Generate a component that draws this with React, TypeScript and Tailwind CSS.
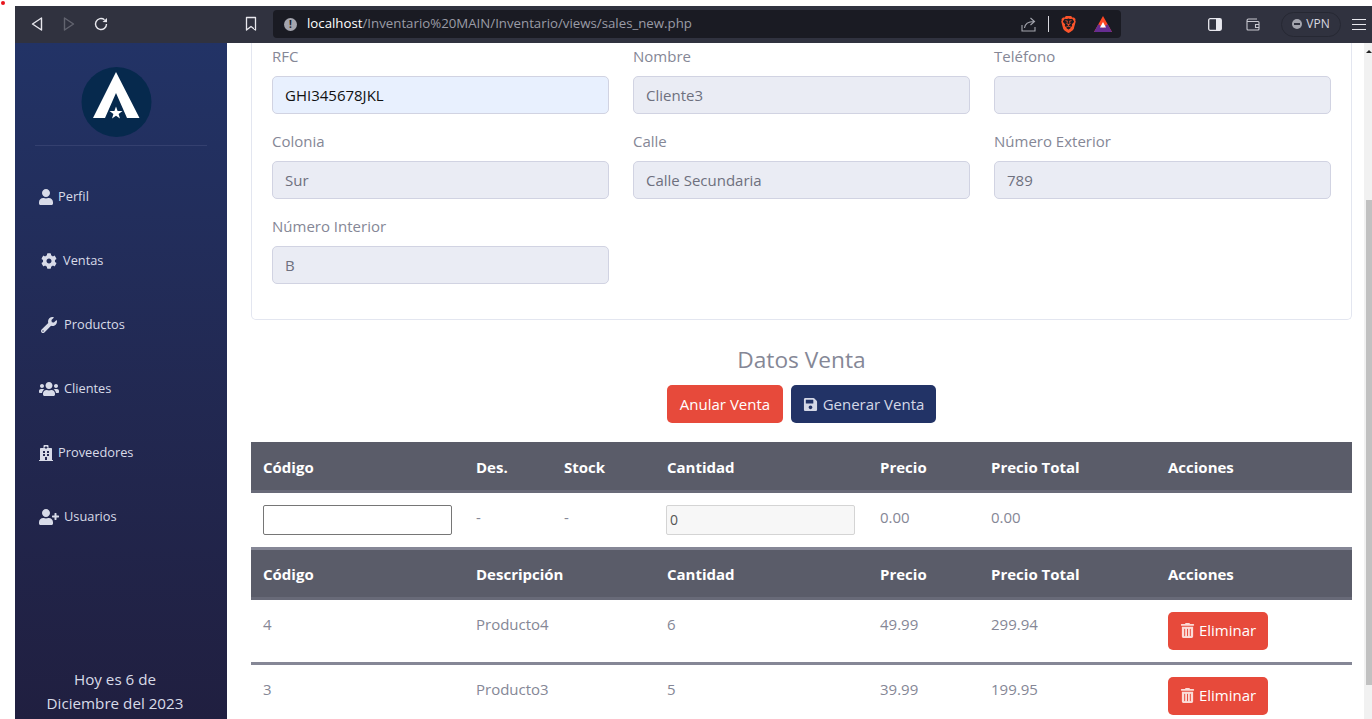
import { FaUser, FaCog, FaWrench, FaUsers, FaHospital, FaUserPlus, FaSave, FaTrashAlt } from 'react-icons/fa';
import { SiBrave } from 'react-icons/si';

const font = { fontFamily: '"Open Sans", "Noto Sans", sans-serif' };

const navItems = [
  { label: 'Perfil', Icon: FaUser, gap: 'gap-[4px] -ml-px', size: 16 },
  { label: 'Ventas', Icon: FaCog, gap: 'gap-[6px] ml-[2px]', size: 16 },
  { label: 'Productos', Icon: FaWrench, gap: 'gap-[7px] ml-[2px]', size: 16 },
  { label: 'Clientes', Icon: FaUsers, gap: 'gap-[5px]', size: 20 },
  { label: 'Proveedores', Icon: FaHospital, gap: 'gap-[4px] -ml-px', size: 16 },
  { label: 'Usuarios', Icon: FaUserPlus, gap: 'gap-[5px]', size: 20 },
];

const fields = [
  { label: 'RFC', value: 'GHI345678JKL', active: true },
  { label: 'Nombre', value: 'Cliente3' },
  { label: 'Teléfono', value: '' },
  { label: 'Colonia', value: 'Sur' },
  { label: 'Calle', value: 'Calle Secundaria' },
  { label: 'Número Exterior', value: '789' },
  { label: 'Número Interior', value: 'B' },
];

const rows = [
  { code: '4', name: 'Producto4', qty: '6', price: '49.99', total: '299.94' },
  { code: '3', name: 'Producto3', qty: '5', price: '39.99', total: '199.95' },
];

function Toolbar() {
  return (
    <div className="flex h-[37px] shrink-0 items-center bg-[#30323f] pb-px text-[#e8e8ee]">
      <div className="flex w-[258px] items-center">
        <svg className="ml-[15px]" width="14" height="16" viewBox="0 0 14 16" fill="none" stroke="#e8e8ee" strokeWidth="1.4" strokeLinejoin="round">
          <path d="M11.5 2 L2.5 8 L11.5 14 Z" />
        </svg>
        <svg className="ml-[18px]" width="14" height="16" viewBox="0 0 14 16" fill="none" stroke="#62646f" strokeWidth="1.4" strokeLinejoin="round">
          <path d="M2.5 2 L11.5 8 L2.5 14 Z" />
        </svg>
        <svg className="ml-[17px]" width="16" height="16" viewBox="0 0 16 16" fill="none" stroke="#e8e8ee" strokeWidth="1.4">
          <path d="M13.5 8 A5.5 5.5 0 1 1 11.5 3.8" />
          <path d="M9.5 6 L14 6.2 L14 2 Z" fill="#e8e8ee" stroke="none" />
        </svg>
        <svg className="ml-[136px]" width="12" height="16" viewBox="0 0 12 16" fill="none" stroke="#e8e8ee" strokeWidth="1.3" strokeLinejoin="round">
          <path d="M1.5 1.5 H10.5 V14 L6 10.5 L1.5 14 Z" />
        </svg>
      </div>
      <div className="flex h-[28px] w-[848px] items-center rounded-[4px] bg-[#1a1b23]">
        <span className="ml-[11px] flex h-[13px] w-[13px] items-center justify-center rounded-full bg-[#a4a5ae] text-[10px] font-bold leading-none text-[#1a1b23]">!</span>
        <span className="ml-[10px] text-[13.25px] text-[#9a9ba6]">
          <span className="text-white">localhost</span>/Inventario%20MAIN/Inventario/views/sales_new.php
        </span>
        <div className="ml-auto flex items-center">
          <svg width="15" height="15" viewBox="0 0 15 15" fill="none" stroke="#a4a5ae" strokeWidth="1.1">
            <path d="M1 8 V14 H14 V10" />
            <path d="M3.5 11 C4 6.5 7 4.5 13 4.5 M9.5 1 L13.5 4.5 L9.5 8" />
          </svg>
          <span className="ml-[12px] h-[16px] w-px bg-[#d8d8de]" />
          <SiBrave className="ml-[11px] text-[#fb542b]" size={17} />
          <svg className="ml-[17px] mr-[9px]" width="18" height="16" viewBox="0 0 18 16">
            <path d="M9 0 L18 16 H0 Z" fill="#ff4724" />
            <path d="M0 16 L4.5 8 L9 12 L13.5 8 L18 16 Z" fill="#662d91" />
            <path d="M9 6 L12 11.5 H6 Z" fill="#fff" />
          </svg>
        </div>
      </div>
      <div className="flex flex-1 items-center">
        <svg className="ml-[87px]" width="14" height="13" viewBox="0 0 14 13">
          <rect x="0.7" y="0.7" width="12.6" height="11.6" rx="1.5" fill="none" stroke="#e8e8ee" strokeWidth="1.3" />
          <rect x="8" y="1" width="5" height="11" fill="#e8e8ee" />
        </svg>
        <svg className="ml-[24px]" width="14" height="13" viewBox="0 0 14 13" fill="none" stroke="#c8c8d0" strokeWidth="1.1">
          <path d="M1 3 V11 Q1 12 2 12 H12 Q13 12 13 11 V4.5 Q13 3.5 12 3.5 H2 Q1 3.5 1 2.5 Q1 1 2.5 1 H11" />
          <path d="M13 6.5 H9.5 V9.5 H13" />
        </svg>
        <div className="ml-[21px] flex h-[25px] w-[60px] items-center justify-center gap-[4px] rounded-full border border-[#262833]">
          <span className="relative h-[10px] w-[10px] rounded-full bg-[#a4a5ae]">
            <span className="absolute left-[2px] top-[4px] h-[2px] w-[6px] bg-[#30323f]" />
          </span>
          <span className="text-[12px] text-[#d8d8e0]">VPN</span>
        </div>
        <div className="ml-[11px] flex w-[14px] flex-col gap-[4px]">
          <span className="h-px bg-[#e8e8ee]" />
          <span className="h-px bg-[#e8e8ee]" />
          <span className="h-px bg-[#e8e8ee]" />
        </div>
      </div>
    </div>
  );
}

function Sidebar() {
  return (
    <aside className="flex w-[212px] shrink-0 flex-col bg-gradient-to-b from-[#223366] to-[#201f40] text-[#d8dbe8]">
      <div className="flex justify-center pr-[9px] pt-[24px]">
        <svg width="72" height="70" viewBox="0 0 72 70">
          <ellipse cx="35.5" cy="35" rx="35" ry="35" fill="#06294d" />
          <path d="M35 5 L58.5 51 H46 L35 26 L24 51 H12 Z" fill="#fff" />
          <path d="M35 39.5 L36.6 44 L41.5 44 L37.6 47 L39 51.5 L35 48.8 L31 51.5 L32.4 47 L28.5 44 L33.4 44 Z" fill="#fff" />
        </svg>
      </div>
      <div className="mx-[20px] mt-[8px] h-px bg-[#34406f]" />
      <nav className="mt-[19px] flex flex-col">
        {navItems.map(({ label, Icon, gap, size }) => (
          <div key={label} className="flex h-[64px] items-center pl-[24px]">
            <a className={`flex items-center text-[12.8px] ${gap}`}>
              <Icon size={size} />
              <span>{label}</span>
            </a>
          </div>
        ))}
      </nav>
      <div className="mt-auto pb-[4px] pr-[12px] text-center text-[15.2px] leading-[24px]">
        Hoy es 6 de
        <br />
        Diciembre del 2023
      </div>
    </aside>
  );
}

function ClientCard() {
  return (
    <section className="rounded-b-[5px] border border-t-0 border-[#e3e6f0] px-[20px] pb-[35px] pt-[1px]">
      <div className="grid grid-cols-3 gap-x-[24px] gap-y-[15px]">
        {fields.map((f) => (
          <div key={f.label}>
            <label className="mb-[8px] block text-[15px] leading-[24px] text-[#858796]">{f.label}</label>
            <input
              readOnly
              value={f.value}
              className={`block h-[38px] w-full rounded-[5px] border border-[#d1d3e2] px-[12px] text-[15px] ${
                f.active ? 'bg-[#e8f0fe] text-[#111]' : 'bg-[#eaecf4] text-[#6e707e]'
              }`}
            />
          </div>
        ))}
      </div>
    </section>
  );
}

function DeleteButton() {
  return (
    <button className="flex h-[38px] w-[100px] items-center justify-center gap-[4px] rounded-[5px] bg-[#e74a3b] text-[15px] text-white">
      <FaTrashAlt size={15} className="text-[#fbdcd8]" />
      Eliminar
    </button>
  );
}

function SalesTable() {
  const head = 'px-[12px] pt-[2px] text-left align-middle text-[15px] font-bold text-white';
  const cell = 'px-[12px] text-[15px] text-[#858796]';
  return (
    <table className="w-full table-fixed border-collapse">
      <colgroup>
        <col className="w-[213px]" />
        <col className="w-[88px]" />
        <col className="w-[103px]" />
        <col className="w-[213px]" />
        <col className="w-[111px]" />
        <col className="w-[177px]" />
        <col className="w-[196px]" />
      </colgroup>
      <thead>
        <tr className="h-[49px] border-b-[3px] border-[#686a78] bg-[#5a5c69]">
          <th className={head}>Código</th>
          <th className={head}>Des.</th>
          <th className={head}>Stock</th>
          <th className={head}>Cantidad</th>
          <th className={head}>Precio</th>
          <th className={head}>Precio Total</th>
          <th className={head}>Acciones</th>
        </tr>
      </thead>
      <tbody>
        <tr className="h-[57px]">
          <td className="px-[12px]">
            <input className="block h-[30px] w-full rounded-[2px] border border-[#767676] bg-white" />
          </td>
          <td className={`${cell} pb-[4px]`}>-</td>
          <td className={`${cell} pb-[4px]`}>-</td>
          <td className="px-[12px]">
            <input
              readOnly
              value="0"
              className="-ml-px block h-[30px] w-full rounded-[2px] border border-[#d4d4d4] bg-[#f7f7f7] px-[3px] text-[14px] text-[#555]"
            />
          </td>
          <td className={`${cell} pb-[4px]`}>0.00</td>
          <td className={`${cell} pb-[4px]`}>0.00</td>
          <td />
        </tr>
        <tr className="h-[50px] border-y-[3px] border-t-[#858796] border-b-[#686a78] bg-[#5a5c69]">
          <th className={head}>Código</th>
          <th className={head} colSpan={2}>Descripción</th>
          <th className={head}>Cantidad</th>
          <th className={head}>Precio</th>
          <th className={head}>Precio Total</th>
          <th className={head}>Acciones</th>
        </tr>
        {rows.map((r) => (
          <tr key={r.code} className="h-[65px] border-b-[3px] border-[#858796]">
            <td className={`${cell} pb-[13px]`}>{r.code}</td>
            <td className={`${cell} pb-[13px]`} colSpan={2}>{r.name}</td>
            <td className={`${cell} pb-[13px]`}>{r.qty}</td>
            <td className={`${cell} pb-[13px]`}>{r.price}</td>
            <td className={`${cell} pb-[13px]`}>{r.total}</td>
            <td className="px-[12px]">
              <DeleteButton />
            </td>
          </tr>
        ))}
      </tbody>
    </table>
  );
}

export default function App() {
  return (
    <div className="relative flex h-[719px] flex-col overflow-hidden bg-white pl-[15px] pt-[6px]" style={font}>
      <span className="absolute left-[1px] top-[1px] h-[4px] w-[4px] rounded-full bg-[#e8141c]" />
      <Toolbar />
      <div className="flex min-h-0 flex-1">
        <Sidebar />
        <main className="min-w-0 flex-1 overflow-hidden pl-[24px] pr-[12px]">
          <ClientCard />
          <h2 className="mt-[26px] text-center text-[22.7px] leading-[28px] text-[#858796]">Datos Venta</h2>
          <div className="mt-[11px] flex justify-center gap-[8px]">
            <button className="h-[38px] w-[116px] rounded-[5px] bg-[#e74a3b] text-[15px] text-white">Anular Venta</button>
            <button className="flex h-[38px] w-[145px] items-center justify-center gap-[5px] rounded-[5px] bg-[#223366] text-[15px] text-[#d4d8e6]">
              <FaSave size={15} />
              Generar Venta
            </button>
          </div>
          <div className="mt-[19px]">
            <SalesTable />
          </div>
        </main>
        <div className="relative w-[8px] shrink-0 bg-[#f1f1f1]">
          <span className="absolute right-0 top-[7px] h-0 w-0 border-x-[3px] border-b-[3px] border-x-transparent border-b-[#222]" />
          <div className="absolute left-[2px] right-0 top-[157px] h-[485px] bg-[#c1c1c1]" />
        </div>
      </div>
    </div>
  );
}
